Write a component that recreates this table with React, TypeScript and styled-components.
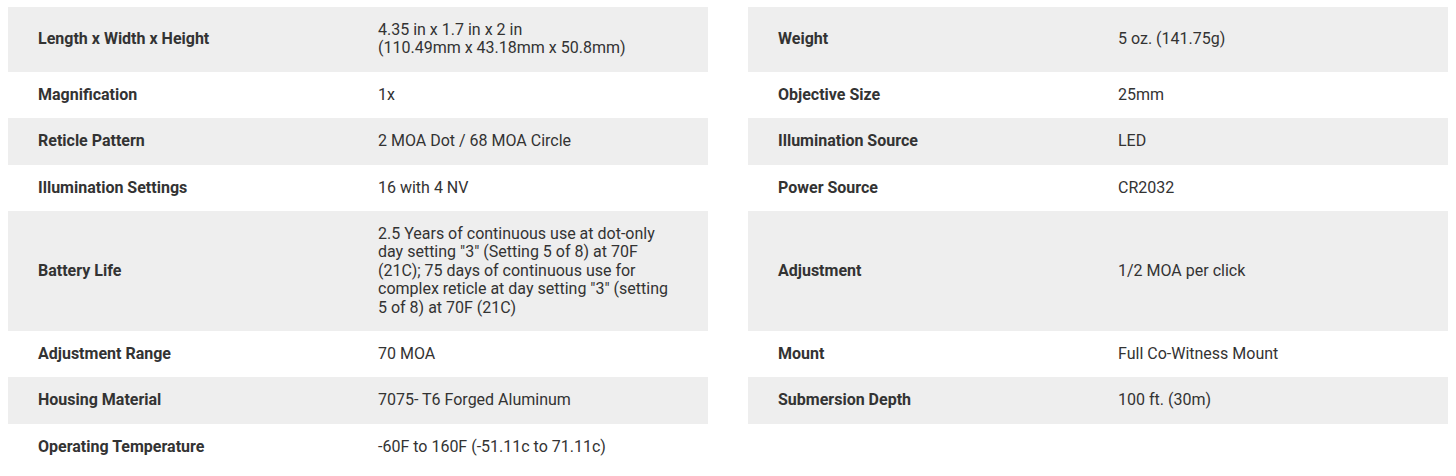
import React from "react";
import styled, { createGlobalStyle } from "styled-components";

const Global = createGlobalStyle`
  html, body { margin: 0; padding: 0; background: #fff; }
  body { font-family: Roboto, "Liberation Sans", Arial, sans-serif; }
`;

const Page = styled.div`
  padding: 7px 8px;
`;

const Table = styled.table`
  border-collapse: collapse;
  table-layout: fixed;
  width: 1440px;
  font-size: 16px;
  line-height: 18.4px;
  color: #333;
`;

const Row = styled.tr``;

const Label = styled.td<{ $shade: boolean }>`
  width: 280px;
  padding: 14px 30px;
  font-weight: 700;
  vertical-align: middle;
  background: ${(p) => (p.$shade ? "#eeeeee" : "#ffffff")};
`;

const Value = styled.td<{ $shade: boolean }>`
  width: 300px;
  padding: 14px 30px;
  font-weight: 400;
  vertical-align: middle;
  background: ${(p) => (p.$shade ? "#eeeeee" : "#ffffff")};
`;

const Spacer = styled.td`
  width: 40px;
  padding: 0;
  background: #fff;
`;

type Pair = [string, React.ReactNode] | null;

const rows: [Pair, Pair][] = [
  [
    [
      "Length x Width x Height",
      <>
        4.35 in x 1.7 in x 2 in
        <br />
        (110.49mm x 43.18mm x 50.8mm)
      </>,
    ],
    ["Weight", "5 oz. (141.75g)"],
  ],
  [["Magnification", "1x"], ["Objective Size", "25mm"]],
  [["Reticle Pattern", "2 MOA Dot / 68 MOA Circle"], ["Illumination Source", "LED"]],
  [["Illumination Settings", "16 with 4 NV"], ["Power Source", "CR2032"]],
  [
    [
      "Battery Life",
      ' 2.5 Years of continuous use at dot-only day setting "3" (Setting 5 of 8) at 70F (21C); 75 days of continuous use for complex reticle at day setting "3" (setting 5 of 8) at 70F (21C)'.trim(),
    ],
    ["Adjustment", "1/2 MOA per click"],
  ],
  [["Adjustment Range", "70 MOA"], ["Mount", "Full Co-Witness Mount"]],
  [["Housing Material", "7075- T6 Forged Aluminum"], ["Submersion Depth", "100 ft. (30m)"]],
  [["Operating Temperature", "-60F to 160F (-51.11c to 71.11c)"], null],
];

export default function App() {
  return (
    <>
      <Global />
      <Page>
        <Table>
          <tbody>
            {rows.map(([l, r], i) => {
              const shade = i % 2 === 0;
              return (
                <Row key={i}>
                  <Label $shade={shade}>{l?.[0]}</Label>
                  <Value $shade={shade}>{l?.[1]}</Value>
                  <Spacer />
                  <Label $shade={shade && !!r}>{r?.[0]}</Label>
                  <Value $shade={shade && !!r}>{r?.[1]}</Value>
                </Row>
              );
            })}
          </tbody>
        </Table>
      </Page>
    </>
  );
}
